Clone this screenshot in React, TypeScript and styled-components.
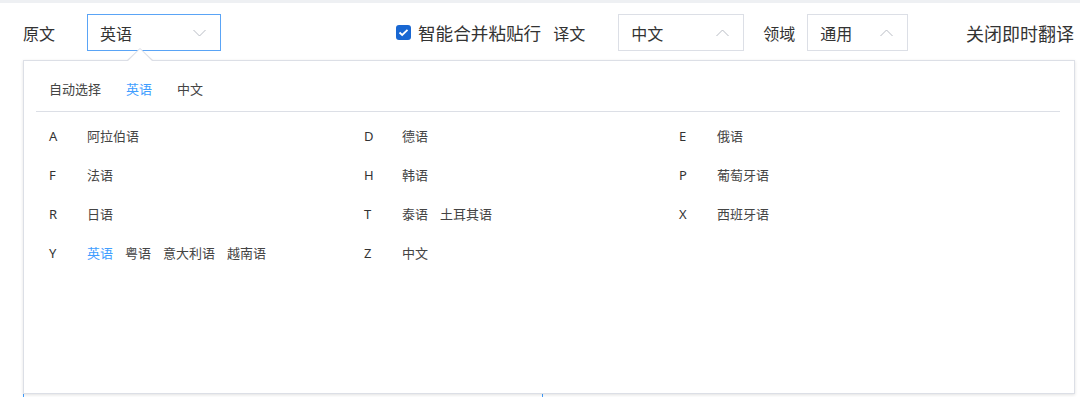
import React from "react";
import styled, { createGlobalStyle } from "styled-components";

const Global = createGlobalStyle`
  html, body { margin: 0; padding: 0; background: #fff; height: 397px; overflow: hidden; }
  body { font-family: "Noto Sans", "Noto Sans CJK SC", sans-serif; color: #333; }
  * { box-sizing: border-box; }
`;

const Page = styled.div`
  width: 1080px;
  height: 397px;
  overflow: hidden;
`;

const TopStrip = styled.div`
  height: 3px;
  background: #eef0f3;
`;

const Toolbar = styled.div`
  display: flex;
  align-items: center;
  padding: 11px 6px 0 23px;
  height: 48px;
`;

const Label = styled.span<{ $size?: number; $ml?: number }>`
  font-family: "Noto Sans CJK SC", sans-serif;
  font-size: ${(p) => p.$size ?? 16}px;
  color: #333;
  margin-left: ${(p) => p.$ml ?? 0}px;
  white-space: nowrap;
  line-height: 1;
`;

const Select = styled.div<{ $w: number; $ml: number; $active?: boolean }>`
  display: flex;
  align-items: center;
  justify-content: space-between;
  width: ${(p) => p.$w}px;
  height: 37px;
  margin-left: ${(p) => p.$ml}px;
  padding: 0 14px 0 12px;
  border: 1px solid ${(p) => (p.$active ? "#5aa4f6" : "#dcdfe6")};
  font-family: "Noto Sans CJK SC", sans-serif;
  font-size: 16px;
  color: #333;
  background: #fff;
`;

const Check = styled.span`
  display: inline-flex;
  align-items: center;
  justify-content: center;
  width: 15px;
  height: 15px;
  border-radius: 3px;
  background: #1967d2;
  margin-left: 175px;
  margin-right: 7px;
`;

const CloseLink = styled(Label)`
  margin-left: auto;
`;

const Workspace = styled.div`
  position: relative;
  margin-top: 9px;
  padding-left: 23px;
`;

const SourcePanel = styled.div`
  width: 520px;
  height: 400px;
  border: 1px solid #409eff;
  display: flex;
  flex-direction: column;
  align-items: flex-end;
  padding: 331px 12px 0 0;
`;

const Counter = styled.span`
  font-size: 14px;
  color: #a8abb2;
  letter-spacing: 1px;
`;

const Popover = styled.div`
  position: absolute;
  top: 0;
  left: 23px;
  width: 1052px;
  height: 334px;
  background: #fff;
  border: 1px solid #dcdfe6;
  box-shadow: 0 1px 3px rgba(0, 0, 0, 0.12);
  padding: 0 14px 0 12px;
`;

const ArrowOuter = styled.span`
  position: absolute;
  top: -13px;
  left: 102px;
  width: 0;
  height: 0;
  border-left: 14px solid transparent;
  border-right: 14px solid transparent;
  border-bottom: 13px solid #dcdfe6;
`;

const ArrowInner = styled.span`
  position: absolute;
  top: -12px;
  left: 103px;
  width: 0;
  height: 0;
  border-left: 13px solid transparent;
  border-right: 13px solid transparent;
  border-bottom: 13px solid #fff;
`;

const Tabs = styled.div`
  display: flex;
  align-items: center;
  gap: 25px;
  height: 51px;
  padding: 4px 0 0 13px;
  border-bottom: 1px solid #dcdfe6;
`;

const Tab = styled.span<{ $active?: boolean }>`
  font-family: "Noto Sans CJK SC", sans-serif;
  font-size: 13px;
  color: ${(p) => (p.$active ? "#409eff" : "#444")};
`;

const Grid = styled.div`
  display: grid;
  grid-template-columns: 315px 315px 315px;
  grid-auto-rows: 39px;
  padding: 4px 0 0 13px;
`;

const Cell = styled.div`
  display: flex;
  align-items: center;
`;

const Letter = styled.span`
  width: 38px;
  font-family: "Noto Sans", sans-serif;
  font-size: 13px;
  color: #333;
`;

const Langs = styled.div`
  display: flex;
  gap: 12px;
`;

const Lang = styled.span<{ $active?: boolean }>`
  font-family: "Noto Sans CJK SC", sans-serif;
  font-size: 13px;
  color: ${(p) => (p.$active ? "#409eff" : "#444")};
  white-space: nowrap;
`;

const Chevron = ({ up }: { up?: boolean }) => (
  <svg width="13" height="8" viewBox="0 0 13 8" fill="none">
    <path
      d={up ? "M0.5 7 L6.5 1 L12.5 7" : "M0.5 1 L6.5 7 L12.5 1"}
      stroke="#b8bcc4"
      strokeWidth="1"
    />
  </svg>
);

const groups: { letter: string; langs: string[] }[] = [
  { letter: "A", langs: ["阿拉伯语"] },
  { letter: "D", langs: ["德语"] },
  { letter: "E", langs: ["俄语"] },
  { letter: "F", langs: ["法语"] },
  { letter: "H", langs: ["韩语"] },
  { letter: "P", langs: ["葡萄牙语"] },
  { letter: "R", langs: ["日语"] },
  { letter: "T", langs: ["泰语", "土耳其语"] },
  { letter: "X", langs: ["西班牙语"] },
  { letter: "Y", langs: ["英语", "粤语", "意大利语", "越南语"] },
  { letter: "Z", langs: ["中文"] },
];

export default function App() {
  return (
    <Page>
      <Global />
      <TopStrip />
      <Toolbar>
        <Label>原文</Label>
        <Select $w={134} $ml={32} $active>
          <span>英语</span>
          <Chevron />
        </Select>
        <Check>
          <svg width="11" height="9" viewBox="0 0 11 9" fill="none">
            <path d="M1.5 4.5 L4.2 7 L9.5 1.8" stroke="#fff" strokeWidth="1.8" />
          </svg>
        </Check>
        <Label $size={17.6}>智能合并粘贴行</Label>
        <Label $ml={12}>译文</Label>
        <Select $w={126} $ml={33}>
          <span>中文</span>
          <Chevron up />
        </Select>
        <Label $ml={19}>领域</Label>
        <Select $w={101} $ml={12}>
          <span>通用</span>
          <Chevron up />
        </Select>
        <CloseLink $size={18}>关闭即时翻译</CloseLink>
      </Toolbar>
      <Workspace>
        <SourcePanel>
          <Counter>0/5000</Counter>
        </SourcePanel>
        <Popover>
          <ArrowOuter />
          <ArrowInner />
          <Tabs>
            <Tab>自动选择</Tab>
            <Tab $active>英语</Tab>
            <Tab>中文</Tab>
          </Tabs>
          <Grid>
            {groups.map((g) => (
              <Cell key={g.letter}>
                <Letter>{g.letter}</Letter>
                <Langs>
                  {g.langs.map((l) => (
                    <Lang key={l} $active={g.letter === "Y" && l === "英语"}>
                      {l}
                    </Lang>
                  ))}
                </Langs>
              </Cell>
            ))}
          </Grid>
        </Popover>
      </Workspace>
    </Page>
  );
}
